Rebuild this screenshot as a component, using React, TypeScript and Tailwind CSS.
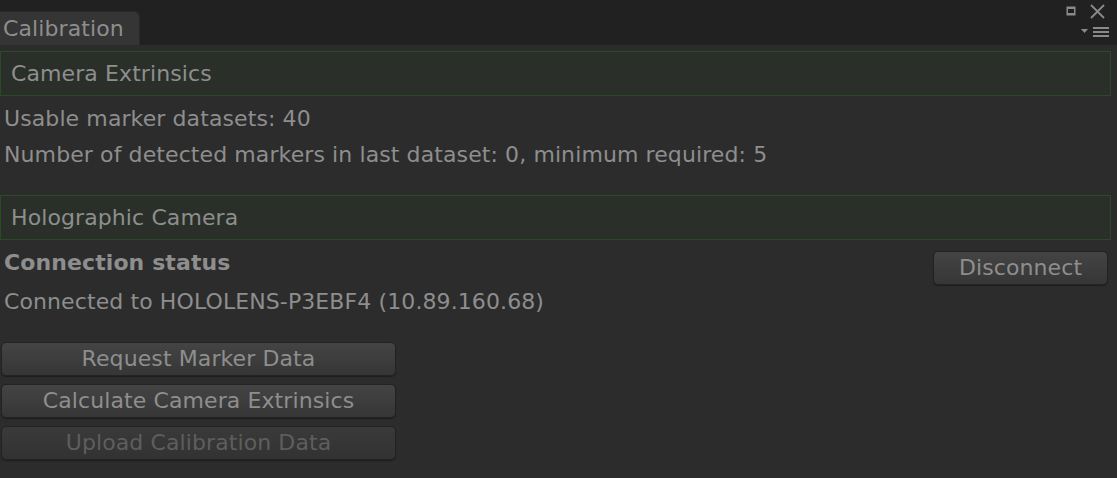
import React from "react";

const font = { fontFamily: '"DejaVu Sans", "Liberation Sans", sans-serif' };

const Header = ({ title }: { title: string }) => (
  <div className="h-[45px] mr-[6px] flex items-center pl-[10px] bg-[#2a3029] border border-[#2c4a2a] text-[#8e8e8e]">
    {title}
  </div>
);

const Button = ({ label, disabled }: { label: string; disabled?: boolean }) => (
  <div
    className={
      "w-[395px] h-[34px] ml-[1px] flex items-center justify-center rounded-[5px] border border-[#232323] bg-gradient-to-b shadow-[0_1px_1px_rgba(0,0,0,0.35)] " +
      (disabled ? "text-[#5e5e5e] from-[#3a3a3a] to-[#323232]" : "text-[#8e8e8e] from-[#444444] to-[#363636]")
    }
  >
    {label}
  </div>
);

export default function App() {
  return (
    <div style={font} className="w-[1117px] h-[478px] bg-[#2c2c2c] text-[22px] tracking-[0.1px] leading-none overflow-hidden flex flex-col">
      <div className="h-[45px] bg-[#212121] flex items-end relative shrink-0">
        <div className="w-[140px] h-[34px] bg-[#353535] rounded-tr-[6px] border-t border-r border-[#2a2a2a] flex items-center pl-[3px] text-[#8e8e8e]">
          Calibration
        </div>
        <svg className="absolute left-[1066px] top-[6px]" width="12" height="12" viewBox="0 0 12 12">
          <rect x="0.5" y="0.5" width="9" height="9" fill="#8a8a8a" />
          <rect x="2" y="3" width="6" height="4" fill="#1e1e1e" />
        </svg>
        <svg className="absolute left-[1089px] top-[3px]" width="18" height="17" viewBox="0 0 18 17">
          <path d="M2 2 L15 15 M15 2 L2 15" stroke="#8a8a8a" strokeWidth="1.8" />
        </svg>
        <svg className="absolute left-[1080px] top-[26px]" width="30" height="12" viewBox="0 0 30 12">
          <path d="M1 3 H8 L4.5 7 Z" fill="#8a8a8a" />
          <rect x="13" y="1" width="16" height="2" fill="#8a8a8a" />
          <rect x="13" y="5" width="16" height="2" fill="#8a8a8a" />
          <rect x="13" y="9" width="16" height="2" fill="#8a8a8a" />
        </svg>
      </div>
      <div className="flex flex-col pt-[6px] text-[#8e8e8e]">
        <Header title="Camera Extrinsics" />
        <div className="pl-[4px] mt-[12px] flex flex-col gap-[14px]">
          <div className="h-[22px] flex items-center">Usable marker datasets: 40</div>
          <div className="h-[22px] flex items-center">Number of detected markers in last dataset: 0, minimum required: 5</div>
        </div>
        <div className="mt-[29px]">
          <Header title="Holographic Camera" />
        </div>
        <div className="flex justify-between items-start mt-[11px]">
          <div className="pl-[4px] pt-[1px] flex flex-col gap-[17px]">
            <div className="h-[22px] flex items-center font-bold">Connection status</div>
            <div className="h-[22px] flex items-center">Connected to HOLOLENS-P3EBF4 (10.89.160.68)</div>
          </div>
          <div className="w-[175px] h-[34px] mr-[9px] flex items-center justify-center rounded-[5px] border border-[#232323] bg-gradient-to-b from-[#444444] to-[#363636] shadow-[0_1px_1px_rgba(0,0,0,0.35)] text-[#8e8e8e]">
            Disconnect
          </div>
        </div>
        <div className="mt-[29px] flex flex-col gap-[8px]">
          <Button label="Request Marker Data" />
          <Button label="Calculate Camera Extrinsics" />
          <Button label="Upload Calibration Data" disabled />
        </div>
      </div>
    </div>
  );
}
